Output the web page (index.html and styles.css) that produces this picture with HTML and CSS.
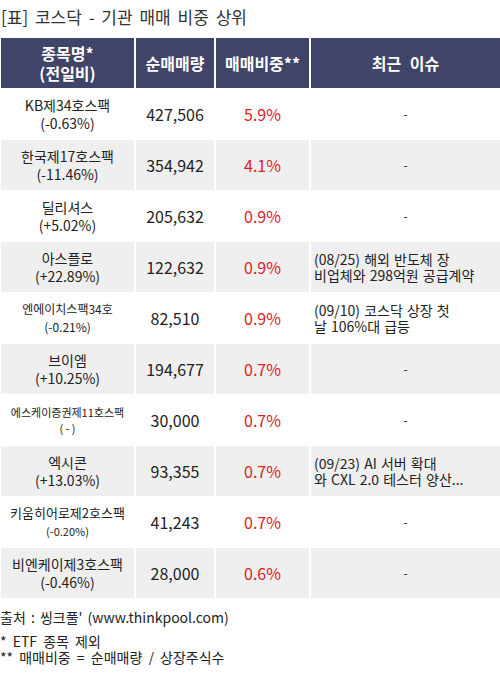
FILE: index.html
```html
<!DOCTYPE html>
<html>
<head>
  <meta charset="utf-8">
  <link rel="stylesheet" href="styles.css">
</head>
<body>
  <div class="title">[표] 코스닥 - 기관 매매 비중 상위</div>
  <table class="rank">
    <tr class="head">
      <th class="c1">종목명*<br>(전일비)</th>
      <th class="c2">순매매량</th>
      <th class="c3">매매비중**</th>
      <th class="c4">최근 이슈</th>
    </tr>
    <tr>
      <td class="name">KB제34호스팩<br>(-0.63%)</td>
      <td class="num">427,506</td>
      <td class="pct">5.9%</td>
      <td class="dash">-</td>
    </tr>
    <tr class="alt">
      <td class="name">한국제17호스팩<br>(-11.46%)</td>
      <td class="num">354,942</td>
      <td class="pct">4.1%</td>
      <td class="dash">-</td>
    </tr>
    <tr>
      <td class="name">딜리셔스<br>(+5.02%)</td>
      <td class="num">205,632</td>
      <td class="pct">0.9%</td>
      <td class="dash">-</td>
    </tr>
    <tr class="alt">
      <td class="name">아스플로<br>(+22.89%)</td>
      <td class="num">122,632</td>
      <td class="pct">0.9%</td>
      <td class="issue">(08/25) 해외 반도체 장<br>비업체와 298억원 공급계약</td>
    </tr>
    <tr>
      <td class="name sm12">엔에이치스팩34호<br>(-0.21%)</td>
      <td class="num">82,510</td>
      <td class="pct">0.9%</td>
      <td class="issue">(09/10) 코스닥 상장 첫<br>날 106%대 급등</td>
    </tr>
    <tr class="alt">
      <td class="name">브이엠<br>(+10.25%)</td>
      <td class="num">194,677</td>
      <td class="pct">0.7%</td>
      <td class="dash">-</td>
    </tr>
    <tr>
      <td class="name sm11">에스케이증권제11호스팩<br>( - )</td>
      <td class="num">30,000</td>
      <td class="pct">0.7%</td>
      <td class="dash">-</td>
    </tr>
    <tr class="alt">
      <td class="name">엑시콘<br>(+13.03%)</td>
      <td class="num">93,355</td>
      <td class="pct">0.7%</td>
      <td class="issue">(09/23) AI 서버 확대<br>와 CXL 2.0 테스터 양산...</td>
    </tr>
    <tr>
      <td class="name sm13">키움히어로제2호스팩<br><span class="sub">(-0.20%)</span></td>
      <td class="num">41,243</td>
      <td class="pct">0.7%</td>
      <td class="dash">-</td>
    </tr>
    <tr class="alt">
      <td class="name sm14">비엔케이제3호스팩<br>(-0.46%)</td>
      <td class="num">28,000</td>
      <td class="pct">0.6%</td>
      <td class="dash">-</td>
    </tr>
  </table>
  <div class="source">출처 : 씽크풀' (www.thinkpool.com)</div>
  <div class="notes">* ETF 종목 제외<br>** 매매비중 = 순매매량 / 상장주식수</div>
</body>
</html>
```

FILE: styles.css
```css
body {
  margin: 0;
  font-family: "Noto Sans CJK KR", "Noto Sans", sans-serif;
  color: #222;
  background: #fff;
}
.title {
  font-size: 17px;
  word-spacing: 3px;
  color: #333;
  height: 30px;
  line-height: 26px;
  padding-left: 1px;
  margin-top: 4px;
  margin-bottom: 4px;
}
.rank {
  width: 500px;
  border-collapse: collapse;
  table-layout: fixed;
}
.rank th, .rank td {
  border-left: 2px solid #fff;
  border-bottom: 1px solid #fff;
  padding: 0;
  text-align: center;
}
.rank th:first-child, .rank td:first-child {
  border-left: 1px solid #fff;
}
.head th {
  background: #3f4468;
  color: #fff;
  font-size: 16px;
  font-weight: bold;
  word-spacing: 5px;
  height: 50px;
  line-height: 20px;
}
.c1 { width: 133px; }
.c2 { width: 78px; }
.c3 { width: 93px; }
.rank td {
  height: 50px;
  font-size: 14px;
  line-height: 18px;
}
.alt td {
  background: #efefef;
}
.name {
  color: #222;
}
.sm12 { font-size: 12px !important; }
.sm11 { font-size: 11px !important; line-height: 16px !important; }
.sm13 { font-size: 13px !important; }
.sm13 .sub { font-size: 11px; }
.sm14 { font-size: 14px; }
.num {
  font-size: 16px !important;
}
.pct {
  font-size: 16px !important;
  color: #e0201e;
}
.dash {
  font-size: 12px !important;
}
.issue {
  text-align: left !important;
  padding-left: 3px !important;
  font-size: 14px !important;
  word-spacing: 1px;
  line-height: 16px !important;
}
.source {
  font-size: 14px;
  word-spacing: 2px;
  margin-top: 9px;
  line-height: 18px;
}
.notes {
  font-size: 14px;
  word-spacing: 3px;
  margin-top: 7px;
  line-height: 16px;
}
```
